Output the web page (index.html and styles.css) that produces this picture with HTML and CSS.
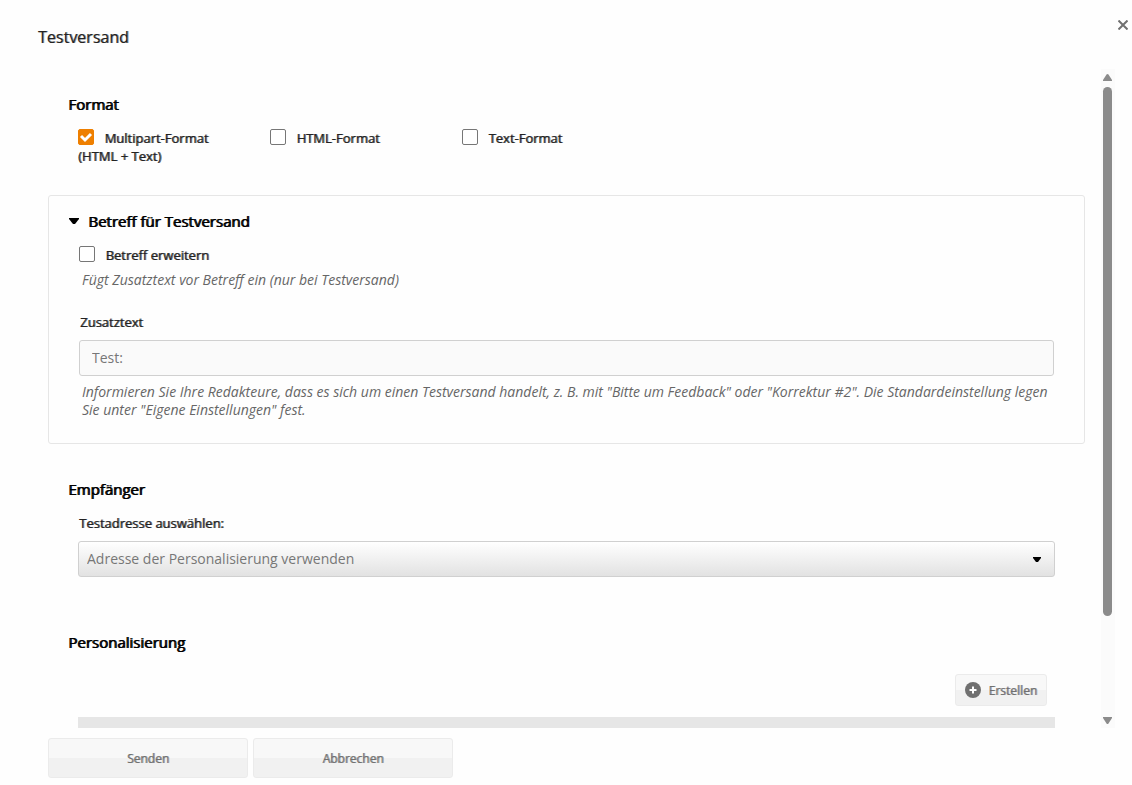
FILE: index.html
```html
<!DOCTYPE html>
<html lang="de">
<head>
  <meta charset="UTF-8" />
  <meta name="viewport" content="width=device-width, initial-scale=1.0"/>
  <title>Testversand</title>
  <link rel="stylesheet" href="styles.css">
</head>
<body>
  <div class="dialog">
    <header class="dialog-header">
      <h1>Testversand</h1>
      <button type="button" class="close" aria-label="Schließen">
        <svg width="10" height="10" viewBox="0 0 10 10"><path d="M0.500 0.500 9.500 9.500M9.500 0.500 0.500 9.500" stroke="#707070" stroke-width="2"/></svg>
      </button>
    </header>

    <div class="dialog-body">
      <form class="content" id="testForm">
        <section class="section">
          <h2>Format</h2>
          <div class="formats">
            <label class="check"><input type="checkbox" checked> Multipart-Format (HTML + Text)</label>
            <label class="check"><input type="checkbox"> HTML-Format</label>
            <label class="check"><input type="checkbox"> Text-Format</label>
          </div>
        </section>

        <section class="panel">
          <h2>
            <svg width="10" height="6" viewBox="0 0 10 6"><path d="M0 0H10V1L6 6H4L0 1Z"/></svg>
            Betreff für Testversand
          </h2>
          <div class="panel-body">
            <label class="check"><input type="checkbox"> Betreff erweitern</label>
            <p class="hint">Fügt Zusatztext vor Betreff ein (nur bei Testversand)</p>
            <label class="field-label" for="prefix">Zusatztext</label>
            <input type="text" class="text-input" id="prefix" placeholder="Test:">
            <p class="hint">Informieren Sie Ihre Redakteure, dass es sich um einen Testversand handelt, z. B. mit "Bitte um Feedback" oder "Korrektur #2". Die Standardeinstellung legen Sie unter "Eigene Einstellungen" fest.</p>
          </div>
        </section>

        <section class="section recipient">
          <h2>Empfänger</h2>
          <label class="field-label" for="address">Testadresse auswählen:</label>
          <div class="select-wrap">
            <select id="address">
              <option>Adresse der Personalisierung verwenden</option>
            </select>
            <svg width="8" height="5" viewBox="0 0 8 5"><path d="M0 0H8V1L5 5H3L0 1Z"/></svg>
          </div>
        </section>

        <section class="section personal">
          <h2>Personalisierung</h2>
          <div class="toolbar">
            <button type="button" class="btn btn-create">
              <svg width="16" height="16" viewBox="0 0 16 16"><circle cx="8" cy="8" r="8" fill="#707070"/><path d="M8 4.500V11.500M4.500 8H11.500" stroke="#fff" stroke-width="2"/></svg>
              Erstellen
            </button>
          </div>
          <div class="list-head"></div>
        </section>
      </form>

      <div class="scrollbar" aria-hidden="true">
        <svg width="9" height="7" viewBox="0 0 9 7"><path d="M3.500 .5Q4.500-.5 5.500 .5L9 6V7H0V6Z" fill="#8b8b8b"/></svg>
        <div class="track"><div class="thumb"></div></div>
        <svg width="9" height="7" viewBox="0 0 9 7"><path d="M3.500 6.500Q4.500 7.500 5.500 6.500L9 1V0H0V1Z" fill="#8b8b8b"/></svg>
      </div>
    </div>

    <footer class="dialog-footer">
      <button type="submit" form="testForm" class="btn btn-wide">Senden</button>
      <button type="button" class="btn btn-wide">Abbrechen</button>
    </footer>
  </div>
</body>
</html>
```
FILE: styles.css
```css
* {
  box-sizing: border-box;
}

body {
  margin: 0;
  background: #fefefe;
  color: #222;
  font-family: "Open Sans", sans-serif;
  font-size: 13px;
  line-height: 18px;
}

h1, h2, p {
  margin: 0;
}

h1 {
  font-size: 16px;
  font-weight: 400;
  line-height: 22px;
  text-shadow: 1px 0 rgba(34, 34, 34, 0.5);
}

h2 {
  color: #000;
  font-size: 15px;
  font-weight: 400;
  line-height: 20px;
  text-shadow: 1px 0 #000;
}

button, input, select {
  font-family: inherit;
}

.dialog {
  display: flex;
  flex-direction: column;
  height: 100vh;
}

.dialog-header {
  display: flex;
  justify-content: space-between;
  align-items: flex-start;
  height: 69px;
  padding: 20px 4px 0 38px;
}

.dialog-header h1 {
  padding-top: 6px;
}

.close {
  display: flex;
  padding: 0;
  border: none;
  background: none;
  cursor: pointer;
}

.dialog-body {
  display: flex;
  flex: 1;
  min-height: 0;
  padding: 0 17px 0 48px;
}

.content {
  flex: 1;
  margin-right: 16px;
  overflow: hidden;
}

.section {
  padding: 0 30px;
}

.section h2 {
  margin: 0 0 15px -10px;
}

.section:first-child {
  padding-top: 25px;
}

.formats {
  display: flex;
  margin-bottom: 30px;
}

.formats .check {
  width: 172px;
  margin-right: 20px;
}

.check, .field-label {
  display: block;
  color: #222;
  text-shadow: 1px 0 rgba(34, 34, 34, 0.7);
}

.field-label {
  padding-left: 1px;
}

.check input {
  appearance: none;
  width: 16px;
  height: 16px;
  margin: 0 7px 0 0;
  border: 1px solid #767676;
  border-radius: 2px;
  background: #fff;
  vertical-align: -2px;
}

.check input:checked {
  border-color: #ee7f00;
  background: #ee7f00 url("data:image/svg+xml,%3Csvg xmlns='http://www.w3.org/2000/svg' viewBox='0 0 14 14'%3E%3Cpath d='M2 6 6 10 12 4' fill='none' stroke='white' stroke-width='3'/%3E%3C/svg%3E") center / 14px 14px;
}

.panel {
  padding: 15px 30px 24px;
  border: 1px solid #e6e6e6;
  border-radius: 3px;
}

.panel h2 {
  display: flex;
  align-items: center;
  gap: 9px;
  margin: 0 0 15px -10px;
}

.hint {
  padding: 0 3px;
  margin-top: 7px;
  color: #666;
  font-size: 14px;
  font-style: italic;
}

.panel .field-label {
  margin-top: 24px;
}

.text-input {
  display: block;
  width: 100%;
  height: 36px;
  margin-top: 9px;
  padding: 0 12px 2px;
  border: 1px solid #d0d0d0;
  border-radius: 3px;
  background: #fafafa;
  font-size: 14px;
}

.text-input::placeholder {
  color: #777;
}

.recipient {
  padding-top: 35px;
}

.select-wrap {
  display: flex;
  align-items: center;
  margin-top: 9px;
}

.select-wrap select {
  appearance: none;
  flex: 1;
  height: 36px;
  padding: 0 30px 2px 8px;
  border: 1px solid #d0d0d0;
  border-radius: 3px;
  background: linear-gradient(#fff, #e2e2e2);
  color: #777;
  font-size: 14px;
}

.select-wrap svg {
  margin: 0 14px 0 -22px;
  pointer-events: none;
}

.personal {
  padding-top: 55px;
}

.toolbar {
  display: flex;
  justify-content: flex-end;
  padding: 7px 8px 11px;
}

.btn {
  border: 1px solid #ebebeb;
  border-radius: 3px;
  background: linear-gradient(#f8f8f8 50%, #f1f1f1 50%);
  color: #707070;
  font-size: 12px;
  text-shadow: 1px 0 rgba(112, 112, 112, 0.7);
  cursor: pointer;
}

.btn-create {
  display: flex;
  align-items: center;
  gap: 8px;
  height: 32px;
  padding: 0 9px;
}

.btn-wide {
  width: 200px;
  height: 40px;
}

.list-head {
  height: 32px;
  background: #e6e6e6;
}

.scrollbar {
  display: flex;
  flex-direction: column;
  align-items: center;
  width: 14px;
  padding: 5px 1px 4px 0;
  background: #fbfbfb;
}

.track {
  flex: 1;
  width: 9px;
  padding: 6px 0 8px;
}

.thumb {
  height: 85%;
  border-radius: 5px;
  background: #8b8b8b;
}

.dialog-footer {
  display: flex;
  gap: 5px;
  height: 57px;
  padding: 10px 48px 0;
}
```
